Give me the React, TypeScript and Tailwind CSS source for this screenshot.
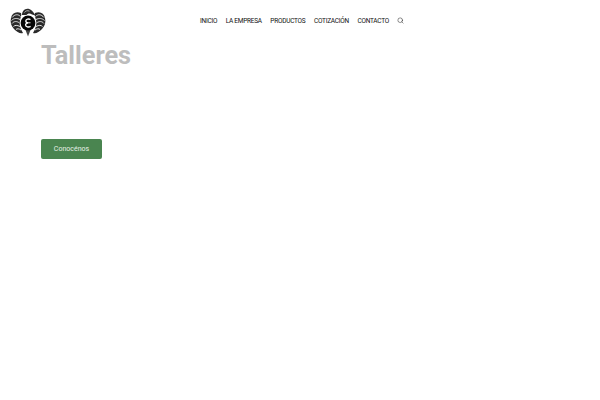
import React from 'react';
import { Search } from 'lucide-react';

const navItems = ['INICIO', 'LA EMPRESA', 'PRODUCTOS', 'COTIZACIÓN', 'CONTACTO'];

const Logo: React.FC = () => (
  <svg width="36" height="29" viewBox="0 0 36 29" className="block">
    {/* left wing */}
    <path d="M11 5 C6 3 2 5 1 10 C0 14 1 18 4 21 C7 24 10 26 13 25 C10 20 9 16 10 12 C10.5 9 12 7 11 5Z" fill="#2a2a2a" />
    {/* right wing */}
    <path d="M25 5 C30 3 34 5 35 10 C36 14 35 18 32 21 C29 24 26 26 23 25 C26 20 27 16 26 12 C25.5 9 24 7 25 5Z" fill="#2a2a2a" />
    <path d="M2 9.5 C5 6 8 6 10.5 8.5 M1.5 12.5 C4 10 7 10 10 11.5 M2 15.5 C4 13 7 13 9.5 15 M3.5 18.5 C5 17 7 17 10 18.5 M6 21.5 C7 20.5 9 20.5 11 22" stroke="#e4e4e4" strokeWidth="1" fill="none" />
    <path d="M34 9.5 C31 6 28 6 25.5 8.5 M34.5 12.5 C32 10 29 10 26 11.5 M34 15.5 C32 13 29 13 26.5 15 M32.5 18.5 C31 17 29 17 26 18.5 M30 21.5 C29 20.5 27 20.5 25 22" stroke="#e4e4e4" strokeWidth="1" fill="none" />
    {/* head */}
    <path d="M12 7 C12 3 15 0 18.5 0.8 C21 1.5 23 3.5 25.5 7.5 L22 6.5 C20 5 18 5 16.5 7 Z" fill="#2a2a2a" />
    <path d="M14.5 4.5 C15.5 2.8 17.5 2.2 19.5 3.2" stroke="#d0d0d0" strokeWidth="0.8" fill="none" />
    {/* tail */}
    <path d="M15.5 22 L18 28.5 L20.5 22 Z" fill="#444" />
    {/* central disc */}
    <circle cx="18" cy="15" r="7.4" fill="#060606" />
    <path d="M20.5 11.5 C18.5 10.5 15.8 11.2 15.8 12.9 C15.8 14 17 14.7 18 14.8 C16.6 15 15.6 15.8 15.6 17 C15.6 18.8 18.5 19.6 20.6 18.4" stroke="#fff" strokeWidth="1.3" fill="none" />
    <path d="M16 14.8 L20.5 14.8" stroke="#fff" strokeWidth="0.9" />
  </svg>
);

export default function App() {
  return (
    <div className="min-h-[400px] w-[600px] overflow-hidden bg-white font-['Roboto',sans-serif]">
      <header className="flex h-[41px] pl-[10px] pt-[8px]">
        <Logo />
        <nav className="ml-[154px] flex h-[26px] items-center gap-[8.5px] pt-[1px] text-[6.5px] tracking-[-0.25px] text-[#111]">
          {navItems.map(item => (
            <a key={item} className="whitespace-nowrap">{item}</a>
          ))}
          <Search size={7} className="mb-[3px] h-[7px] w-[7px]" strokeWidth={1.6} />
        </nav>
      </header>

      <main className="pl-[41px]">
        <h1 className="text-[25.3px] leading-[30px] font-bold text-[#bdbdbd]">Talleres</h1>
        <button className="mt-[68px] flex h-[20px] w-[61px] items-center justify-center rounded-[2px] bg-[#4a8550] pt-[1px] text-[7px] font-normal text-[#e6f0e6]">
          Conocénos
        </button>
      </main>
    </div>
  );
}
